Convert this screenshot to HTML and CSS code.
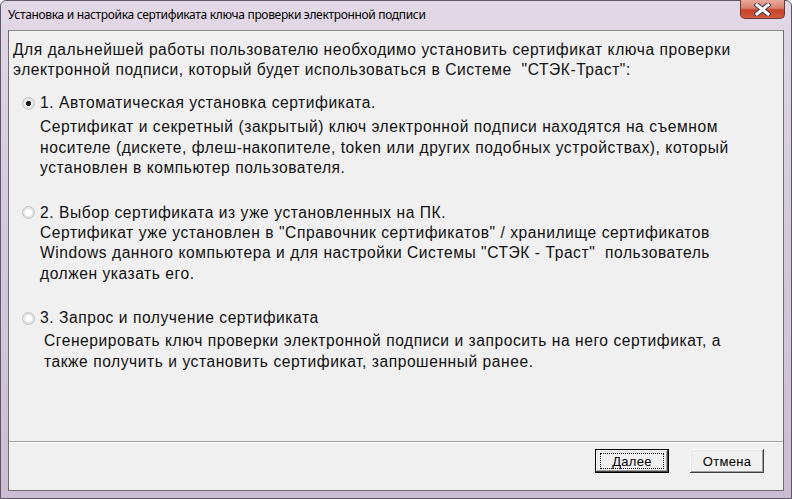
FILE: index.html
```html
<!DOCTYPE html>
<html lang="ru">

<head>
    <meta charset="UTF-8">
    <title>Установка и настройка сертификата ключа проверки электронной подписи</title>
    <link rel="stylesheet" href="styles.css">
</head>

<body>

    <div class="window">
        <div class="titlebar">
            <span class="title">Установка и настройка сертификата ключа проверки электронной подписи</span>
            <div class="close">
                <svg width="17" height="13" viewBox="0 0 17 13">
                    <path d="M3 2 L14 11 M14 2 L3 11" stroke="#3b3b4a" stroke-width="5" stroke-linecap="square"/>
                    <path d="M3 2 L14 11 M14 2 L3 11" stroke="#ffffff" stroke-width="3" stroke-linecap="square"/>
                </svg>
            </div>
        </div>

        <div class="client">
            <div class="content">
                <p class="intro">Для дальнейшей работы пользователю необходимо установить сертификат ключа проверки<br>
                    электронной подписи, который будет использоваться в Системе&nbsp; "СТЭК-Траст":</p>

                <div class="option">
                    <label class="radio-row"><span class="radio checked"></span>1. Автоматическая установка сертификата.</label>
                    <p class="desc desc-first">Сертификат и секретный (закрытый) ключ электронной подписи находятся на съемном<br>
                        носителе (дискете, флеш-накопителе, token или других подобных устройствах), который<br>
                        установлен в компьютер пользователя.</p>
                </div>

                <div class="option">
                    <label class="radio-row"><span class="radio"></span>2. Выбор сертификата из уже установленных на ПК.</label>
                    <p class="desc">Сертификат уже установлен в "Справочник сертификатов" / хранилище сертификатов<br>
                        Windows данного компьютера и для настройки Системы "СТЭК - Траст"&nbsp; пользователь<br>
                        должен указать его.</p>
                </div>

                <div class="option">
                    <label class="radio-row"><span class="radio"></span>3. Запрос и получение сертификата</label>
                    <p class="desc desc-wide">Сгенерировать ключ проверки электронной подписи и запросить на него сертификат, а<br>
                        также получить и установить сертификат, запрошенный ранее.</p>
                </div>
            </div>

            <div class="footer">
                <button class="btn default"><span>Далее</span></button>
                <button class="btn"><span>Отмена</span></button>
            </div>
        </div>
    </div>

</body>

</html>
```

FILE: styles.css
```css
body {
    margin: 0;
    width: 792px;
    height: 499px;
    overflow: hidden;
    background: #ffffff;
}

.window {
    box-sizing: border-box;
    width: 792px;
    height: 499px;
    display: flex;
    flex-direction: column;
    border: 1px solid #5e5866;
    border-radius: 6px 6px 0 0;
    background: linear-gradient(180deg, #e2d8e6 0%, #d6cade 40%, #cdbdd4 100%);
}

.titlebar {
    height: 29px;
    display: flex;
    align-items: flex-start;
    padding-left: 7px;
}

.title {
    font-family: "Noto Sans", sans-serif;
    font-size: 12px;
    line-height: 14px;
    margin-top: 7px;
    color: #000000;
    letter-spacing: -0.33px;
}

.close {
    margin-left: auto;
    margin-right: 6px;
    width: 45px;
    height: 19px;
    margin-top: -1px;
    box-sizing: border-box;
    border: 1px solid #6d3a33;
    border-top: none;
    border-radius: 0 0 5px 5px;
    background: linear-gradient(180deg, #e9a99c 0%, #d9826f 45%, #c7422a 55%, #d25a3c 100%);
    display: flex;
    align-items: center;
    justify-content: center;
}

.client {
    flex: 1;
    margin: 0 7px 7px 7px;
    background: #f0f0f0;
    border: 1px solid #6e6e6e;
    border-top-color: #8a8a8a;
    display: flex;
    flex-direction: column;
    font-family: "Liberation Sans", Arial, sans-serif;
    font-size: 15.6px;
    letter-spacing: 0.55px;
    color: #111111;
}

.content {
    flex: 1;
    padding: 9px 0 0 4px;
}

p {
    margin: 0;
}

.intro {
    line-height: 20px;
    margin-bottom: 13px;
}

.option {
    margin-bottom: 24px;
}

.radio-row {
    display: flex;
    align-items: center;
    height: 20px;
    padding-left: 9px;
}

.radio {
    box-sizing: border-box;
    width: 13px;
    height: 13px;
    border-radius: 50%;
    border: 1px solid #c4c4c4;
    background: radial-gradient(circle at 50% 50%, #f6f6f6 0%, #e2e2e2 70%, #d6d6d6 100%);
    margin-right: 5px;
    position: relative;
}

.radio::after {
    content: "";
    position: absolute;
    left: 2px;
    top: 2px;
    width: 7px;
    height: 7px;
    border-radius: 50%;
    background: #ffffff;
}

.radio.checked::after {
    background: radial-gradient(circle, #1a1a1a 0%, #1a1a1a 45%, #ffffff 60%);
}

.desc {
    line-height: 20.5px;
    padding-left: 27px;
    margin-top: 0;
}

.desc-first {
    margin-top: 4px;
}

.desc-wide {
    padding-left: 31px;
    margin-top: 3px;
}

.footer {
    border-top: 1px solid #a0a0a0;
    box-shadow: inset 0 1px 0 #ffffff;
    height: 41px;
    display: flex;
    justify-content: flex-end;
    align-items: flex-start;
    gap: 21px;
    padding: 7px 19px 0 0;
}

.btn {
    box-sizing: border-box;
    width: 74px;
    height: 24px;
    padding: 0;
    font-family: "Liberation Sans", Arial, sans-serif;
    font-size: 13px;
    letter-spacing: 0.3px;
    color: #000000;
    background: #f0f0f0;
    border: none;
    border-radius: 0;
    box-shadow: inset -1px -1px 0 #404040, inset 1px 1px 0 #ffffff, inset -2px -2px 0 #a0a0a0, inset 2px 2px 0 #e3e3e3;
    display: flex;
    align-items: center;
    justify-content: center;
}

.btn.default {
    box-shadow: inset 0 0 0 1px #000000, inset -2px -2px 0 #404040, inset 2px 2px 0 #ffffff, inset -3px -3px 0 #a0a0a0, inset 3px 3px 0 #e3e3e3;
}

.btn.default span {
    box-sizing: border-box;
    width: 64px;
    height: 16px;
    border: 1px dotted #000000;
    display: flex;
    align-items: center;
    justify-content: center;
}
```
